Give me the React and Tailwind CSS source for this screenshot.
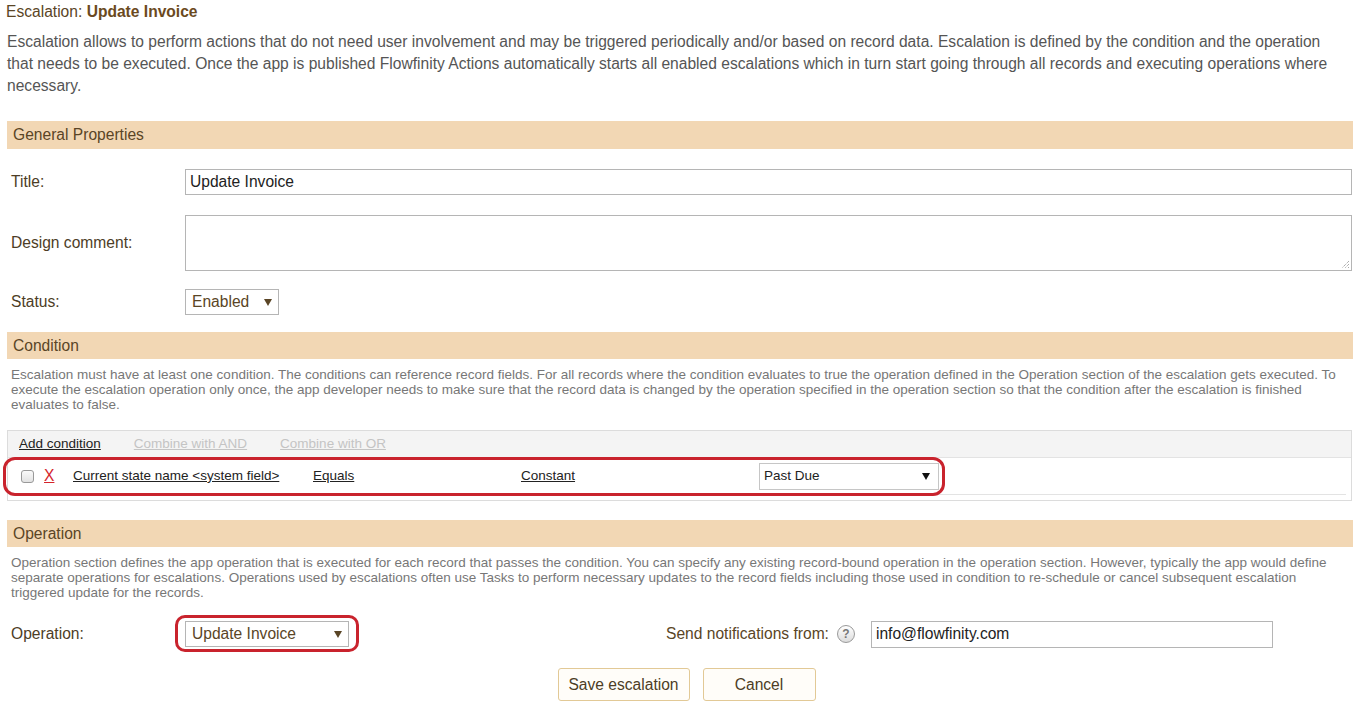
import React from "react";

function Arrow({ className = "" }) {
  return (
    <svg width="8" height="7" viewBox="0 0 8 7" className={className}>
      <path d="M0 0 L8 0 L4 7 Z" fill="currentColor" />
    </svg>
  );
}

function SectionBar({ children, className = "" }) {
  return (
    <div className={"bg-[#f2d7b4] pl-[6px] flex items-center text-[15.6px] text-[#5a4526] " + className}>
      {children}
    </div>
  );
}

export default function App() {
  return (
    <div className="w-[1360px] h-[707px] overflow-hidden bg-white font-['Liberation_Sans',Arial,sans-serif] text-[#4d3d26]">
      <div className="px-[7px]">
        <div className="pt-[3px] h-[21px] leading-[18px] text-[15.6px] -ml-[1px] text-[#5a4526]">
          Escalation: <span className="font-bold text-[#6b4a1e]">Update Invoice</span>
        </div>
        <p className="mt-[10px] text-[15.6px] leading-[22px] text-[#555] whitespace-nowrap">
          Escalation allows to perform actions that do not need user involvement and may be triggered periodically and/or based on record data. Escalation is defined by the condition and the operation
          <br />
          that needs to be executed. Once the app is published Flowfinity Actions automatically starts all enabled escalations which in turn start going through all records and executing operations where
          <br />
          necessary.
        </p>

        <SectionBar className="mt-[24px] h-[28px]">General Properties</SectionBar>

        <div className="mt-[20px] flex items-center">
          <div className="w-[178px] pl-[4px] text-[15.6px]">Title:</div>
          <div className="flex-1 h-[26px] border border-[#b5b5b5] pl-[4px] flex items-center text-[15.6px] text-[#222] mr-[1px]">
            Update Invoice
          </div>
        </div>

        <div className="mt-[20px] flex items-center">
          <div className="w-[178px] pl-[4px] text-[15.6px]">Design comment:</div>
          <div className="flex-1 h-[56px] border border-[#b5b5b5] relative mr-[1px]">
            <svg width="10" height="10" viewBox="0 0 10 10" className="absolute right-[1px] bottom-[1px]">
              <path d="M9 2 L2 9 M9 5 L5 9 M9 8 L8 9" stroke="#888" strokeWidth="1" strokeDasharray="1 1" />
            </svg>
          </div>
        </div>

        <div className="mt-[18px] flex items-center">
          <div className="w-[178px] pl-[4px] text-[15.6px]">Status:</div>
          <div className="w-[94px] h-[26px] border border-[#b5b5b5] flex items-center justify-between pl-[6px] pr-[6px] text-[15.6px] text-[#5a4526]">
            Enabled
            <Arrow className="text-[#5a4526]" />
          </div>
        </div>

        <SectionBar className="mt-[17px] h-[27px]">Condition</SectionBar>

        <p className="mt-[8px] pl-[4px] text-[13.5px] leading-[15px] text-[#777] whitespace-nowrap">
          Escalation must have at least one condition. The conditions can reference record fields. For all records where the condition evaluates to true the operation defined in the Operation section of the escalation gets executed. To
          <br />
          execute the escalation operation only once, the app developer needs to make sure that the record data is changed by the operation specified in the operation section so that the condition after the escalation is finished
          <br />
          evaluates to false.
        </p>

        <div className="mt-[18px] w-[1345px] border border-[#dcdcdc] relative pb-[5px]">
          <div className="h-[27px] bg-[#f4f4f4] border-b border-[#e3e3e3] flex items-center text-[13.5px]">
            <span className="ml-[11px] underline text-[#222]">Add condition</span>
            <span className="ml-[33px] underline text-[#c4c4c4]">Combine with AND</span>
            <span className="ml-[33px] underline text-[#c4c4c4]">Combine with OR</span>
          </div>
          <div className="mx-[5px] h-[37px] border-b border-[#e3e3e3] flex items-center text-[13.5px] text-[#222]">
            <div className="ml-[8px] w-[13px] h-[13px] rounded-[3px] border border-[#999] bg-gradient-to-b from-[#fafafa] to-[#e2e2e2]" />
            <span className="ml-[10px] w-[29px] text-[15.6px] text-[#d4242c] underline">X</span>
            <span className="w-[240px] underline">Current state name &lt;system field&gt;</span>
            <span className="w-[208px] underline">Equals</span>
            <span className="w-[238px] underline">Constant</span>
            <div className="w-[180px] h-[27px] border border-[#c6c6c6] flex items-center justify-between pl-[4px] pr-[8px] text-[13.5px]">
              Past Due
              <Arrow className="text-[#111]" />
            </div>
          </div>
          <div className="absolute left-[-5px] top-[26px] w-[942px] h-[39px] border-[3px] border-[#c9232d] rounded-[12px]" />
        </div>

        <SectionBar className="mt-[19px] h-[27px]">Operation</SectionBar>

        <p className="mt-[8px] pl-[4px] text-[13.5px] leading-[15px] text-[#777] whitespace-nowrap">
          Operation section defines the app operation that is executed for each record that passes the condition. You can specify any existing record-bound operation in the operation section. However, typically the app would define
          <br />
          separate operations for escalations. Operations used by escalations often use Tasks to perform necessary updates to the record fields including those used in condition to re-schedule or cancel subsequent escalation
          <br />
          triggered update for the records.
        </p>

        <div className="mt-[21px] flex items-center h-[26px]">
          <div className="w-[178px] pl-[4px] text-[15.6px]">Operation:</div>
          <div className="relative">
            <div className="w-[164px] h-[26px] border border-[#b5b5b5] flex items-center justify-between pl-[6px] pr-[6px] text-[15.6px] text-[#5a4526]">
              Update Invoice
              <Arrow className="text-[#5a4526]" />
            </div>
            <div className="absolute left-[-10px] top-[-6px] w-[184px] h-[37px] border-[3px] border-[#c9232d] rounded-[10px]" />
          </div>
          <div className="ml-[317px] text-[15.6px] text-[#5a4526]">Send notifications from:</div>
          <div className="ml-[8px] w-[18px] h-[18px] rounded-full border border-[#999] bg-gradient-to-b from-[#ffffff] to-[#dcdcdc] flex items-center justify-center text-[12px] font-bold text-[#777]">
            ?
          </div>
          <div className="ml-[16px] w-[402px] h-[27px] border border-[#b5b5b5] pl-[4px] flex items-center text-[15.6px] text-[#222]">
            info@flowfinity.com
          </div>
        </div>

        <div className="mt-[21px] flex justify-center pl-[13px] gap-[13px]">
          <div className="w-[132px] h-[33px] border border-[#e2c996] rounded-[3px] bg-[#fffdf9] flex items-center justify-center text-[15.6px] text-[#4d3d26]">
            Save escalation
          </div>
          <div className="w-[113px] h-[33px] border border-[#e2c996] rounded-[3px] bg-[#fffdf9] flex items-center justify-center text-[15.6px] text-[#4d3d26]">
            Cancel
          </div>
        </div>
      </div>
    </div>
  );
}
